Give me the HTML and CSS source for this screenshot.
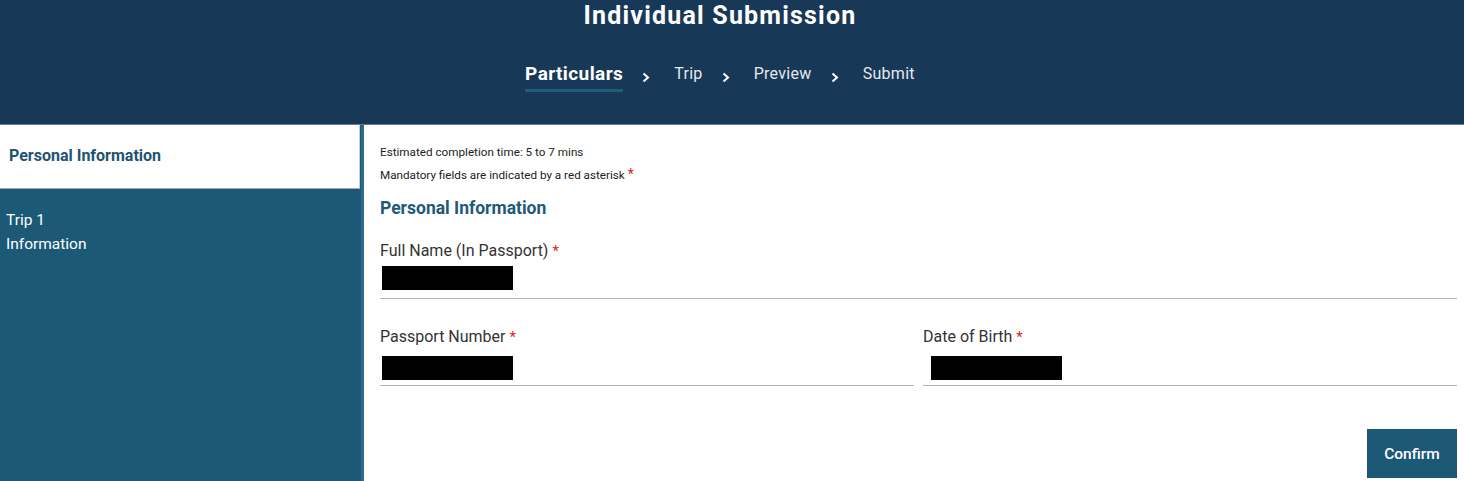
FILE: index.html
```html
<!DOCTYPE html>
<html>
<head>
<meta charset="utf-8">
<link rel="stylesheet" href="styles.css">
</head>
<body>
<header class="top">
  <h1 class="title">Individual Submission</h1>
  <nav class="steps">
    <span class="step step-active">Particulars</span>
    <svg class="chev" width="8" height="11" viewBox="0 0 8 11"><polyline points="1.5,1.5 6,5.5 1.5,9.5" fill="none" stroke="#fff" stroke-width="2"/></svg>
    <span class="step">Trip</span>
    <svg class="chev" width="8" height="11" viewBox="0 0 8 11"><polyline points="1.5,1.5 6,5.5 1.5,9.5" fill="none" stroke="#fff" stroke-width="2"/></svg>
    <span class="step">Preview</span>
    <svg class="chev" width="8" height="11" viewBox="0 0 8 11"><polyline points="1.5,1.5 6,5.5 1.5,9.5" fill="none" stroke="#fff" stroke-width="2"/></svg>
    <span class="step">Submit</span>
  </nav>
</header>
<div class="layout">
  <aside class="side">
    <div class="side-item side-item-active">Personal Information</div>
    <div class="side-item">Trip 1<br>Information</div>
  </aside>
  <main class="main">
    <p class="note">Estimated completion time: 5 to 7 mins</p>
    <p class="note">Mandatory fields are indicated by a red asterisk <span class="req">*</span></p>
    <h2 class="section">Personal Information</h2>
    <div class="field field-first">
      <label class="label">Full Name (In Passport) <span class="req">*</span></label>
      <div class="input"><span class="redact"></span></div>
    </div>
    <div class="row">
      <div class="field">
        <label class="label">Passport Number <span class="req">*</span></label>
        <div class="input input-b"><span class="redact"></span></div>
      </div>
      <div class="field">
        <label class="label">Date of Birth <span class="req">*</span></label>
        <div class="input input-b input-date"><span class="redact"></span></div>
      </div>
    </div>
    <div class="actions">
      <button class="btn">Confirm</button>
    </div>
  </main>
</div>
</body>
</html>
```
FILE: styles.css
```css
* { box-sizing: border-box; }
html, body { margin: 0; padding: 0; }
body {
  font-family: Roboto, "Noto Sans", "Liberation Sans", sans-serif;
  background: #fff;
  color: #333;
  width: 1464px;
  height: 481px;
  overflow: hidden;
}
.top {
  background: #173857;
  height: 125px;
  border-bottom: 1px solid #5f7d94;
  display: flex;
  flex-direction: column;
  align-items: center;
  padding-right: 24px;
}
.title {
  margin: 0;
  font-size: 25px;
  line-height: 32px;
  font-weight: 700;
  color: #fff;
  letter-spacing: 1.2px;
}
.steps {
  margin-top: 30px;
  display: flex;
  align-items: flex-start;
}
.step {
  font-size: 16px;
  line-height: 24px;
  color: #e4e9ee;
  letter-spacing: 0.3px;
}
.step-active {
  font-size: 19px;
  font-weight: 700;
  color: #fff;
  padding-bottom: 3px;
  border-bottom: 3px solid #1f5d7c;
  letter-spacing: 0.4px;
}
.chev {
  margin: 10px 24px 0 19px;
  display: block;
}
.layout {
  display: flex;
  height: 356px;
}
.side {
  width: 364px;
  flex: none;
  background: #1b5977;
  border-right: 3px solid #2b6b88;
  padding-right: 1px;
}
.side-item {
  font-size: 15.5px;
  line-height: 24px;
  color: #fff;
  padding: 19px 6px;
}
.side-item-active {
  background: #fff;
  color: #1e5472;
  font-weight: 700;
  font-size: 16px;
  height: 64px;
  padding: 19px 9px;
  border-bottom: 1px solid #9aa9b4;
  border-right: 1px solid #c8d0d6;
}
.main {
  flex: 1;
  padding: 16px 7px 0 16px;
}
.note {
  margin: 0;
  font-size: 11.7px;
  line-height: 22px;
  color: #222;
}
.req { color: #e21b1b; font-size: 15px; }
.note .req { font-size: 14px; }
.section {
  margin: 10px 0 0;
  font-size: 17.5px;
  line-height: 24px;
  font-weight: 700;
  color: #1e5a78;
}
.field { display: flex; flex-direction: column; }
.field-first { margin-top: 20px; }
.label {
  font-size: 16px;
  line-height: 22px;
  color: #333;
}
.input {
  height: 37px;
  padding: 4px 0 0 2px;
  border-bottom: 1px solid #b5b5b5;
}
.input-b { height: 38px; padding-top: 8px; }
.input-date { padding-left: 8px; }
.redact {
  display: block;
  width: 131px;
  height: 24px;
  background: #000;
}
.row {
  margin-top: 27px;
  display: grid;
  grid-template-columns: 1fr 1fr;
  column-gap: 9px;
}
.actions {
  display: flex;
  justify-content: flex-end;
  margin-top: 43px;
}
.btn {
  width: 90px;
  height: 49px;
  border: none;
  background: #1b5977;
  color: #fff;
  font-family: Roboto, "Noto Sans", "Liberation Sans", sans-serif;
  font-size: 15.5px;
  font-weight: 500;
}
```
